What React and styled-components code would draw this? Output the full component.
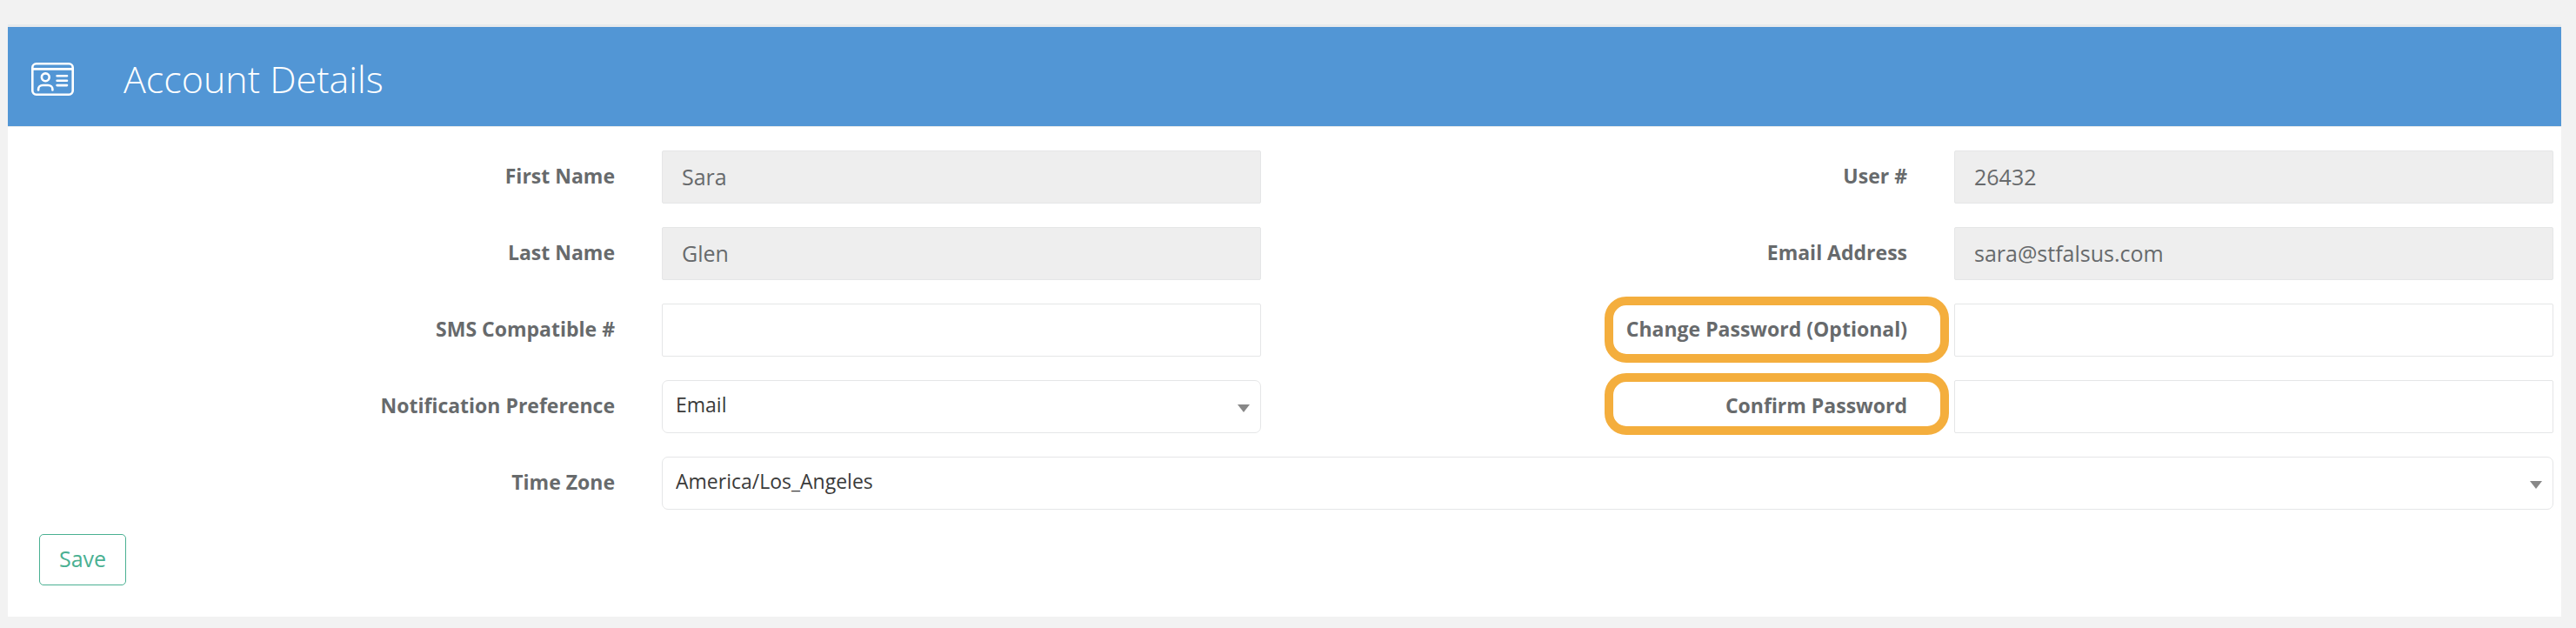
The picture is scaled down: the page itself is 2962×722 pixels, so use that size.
import React, {useState} from "react";
import styled, {createGlobalStyle} from "styled-components";

const GlobalStyle = createGlobalStyle`
  * {
    box-sizing: border-box;
  }

  body {
    margin: 0;
    background: #f2f2f2;
    color: #676a6c;
    font-family: "Open Sans", "Noto Sans", sans-serif;
  }
`;

const IdCardSvg = () => (
    <svg width="49" height="38" viewBox="0 0 49 38" fill="none" stroke="#fff" strokeWidth="2.6"
         strokeLinecap="round" aria-hidden="true">
        <rect x="1.3" y="1.3" width="46.4" height="35.4" rx="4.4"/>
        <path d="M1.5 7.4H47.5" strokeLinecap="butt"/>
        <circle cx="16.3" cy="16.8" r="4.4"/>
        <path d="M8.1 31.4V30.6C8.1 27.7 10.4 26 13.1 26H19.3C22 26 24.4 27.7 24.4 30.6V31.4"/>
        <path d="M29.6 15.2H41M29.6 20.7H41M29.6 26.1H41"/>
    </svg>
);

const Field = ({id, label, highlight, ...inputProps}) => (
    <>
        <Label htmlFor={id}>
            {label}
            {highlight && <Highlight $size={highlight}/>}
        </Label>
        <Input id={id} {...inputProps}/>
    </>
);

const SelectField = ({id, label, options, wide}) => {
    const [value, setValue] = useState(options[0]);

    return (
        <>
            <Label htmlFor={id}>{label}</Label>
            <SelectBox $wide={wide}>
                <Select id={id} value={value} onChange={(e) => setValue(e.target.value)}>
                    {options.map((option) => <option key={option}>{option}</option>)}
                </Select>
            </SelectBox>
        </>
    );
};

const App = () => {

    return (
        <Page>
            <GlobalStyle/>
            <Card>
                <Header>
                    <IdCardSvg/>
                    <Title>Account Details</Title>
                </Header>

                <Form onSubmit={(e) => e.preventDefault()}>
                    <Fields>
                        <Field id="firstName" label="First Name" defaultValue="Sara" disabled/>
                        <Field id="userNumber" label="User #" defaultValue="26432" disabled/>

                        <Field id="lastName" label="Last Name" defaultValue="Glen" disabled/>
                        <Field id="email" label="Email Address" defaultValue="sara@stfalsus.com" disabled/>

                        <Field id="sms" label="SMS Compatible #" type="tel"/>
                        <Field id="password" label="Change Password (Optional)" type="password" highlight="large"/>

                        <SelectField id="notification" label="Notification Preference" options={["Email", "SMS"]}/>
                        <Field id="confirm" label="Confirm Password" type="password" highlight="small"/>

                        <SelectField id="timeZone" label="Time Zone" wide
                                     options={["America/Los_Angeles", "America/Denver", "America/Chicago", "America/New_York"]}/>
                    </Fields>

                    <SaveButton type="submit">Save</SaveButton>
                </Form>
            </Card>
        </Page>
    );
};

export default App;

const Page = styled.main`
  padding: 28px 17px 13px 9px;
`;

const Card = styled.section`
  background: #fff;
  border-top: 3px solid #e7eaec;
`;

const Header = styled.header`
  display: flex;
  align-items: center;
  gap: 57px;
  padding: 30px 27px 24px;
  background: #5296d5;
  border-bottom: 1px solid #e7eaec;
`;

const Title = styled.h1`
  margin: 0;
  color: #fff;
  font-size: 43px;
  font-weight: 300;
  line-height: 60px;
`;

const Form = styled.form`
  padding: 27px 9px 36px;
`;

const Fields = styled.div`
  display: grid;
  grid-template-columns: repeat(4, minmax(0, 1fr));
  gap: 27px 54px;
`;

const Label = styled.label`
  position: relative;
  padding-top: 12px;
  font-size: 23px;
  font-weight: 700;
  line-height: 34px;
  text-align: right;
`;

// orange ring drawn over the label
const Highlight = styled.span`
  position: absolute;
  top: -8px;
  right: -48px;
  width: 396px;
  height: ${({$size}) => $size === "large" ? "76px" : "71px"};
  border: 10px solid #f4ae3d;
  border-radius: 25px;
  pointer-events: none;
`;

const Input = styled.input`
  width: 100%;
  height: 61px;
  padding: 0 22px 2px;
  background: #fff;
  border: 1px solid #e5e6e7;
  border-radius: 2px;
  color: #676a6c;
  font-family: inherit;
  font-size: 25px;

  &:disabled {
    background: #eee;
  }
`;

const SelectBox = styled.div`
  position: relative;
  grid-column: ${({$wide}) => $wide ? "span 3" : "auto"};

  &::after {
    content: "";
    position: absolute;
    top: 28px;
    right: 13px;
    border: 7px solid transparent;
    border-top: 9px solid #888;
    border-bottom: 0;
    pointer-events: none;
  }
`;

const Select = styled.select`
  display: block;
  width: 100%;
  height: 61px;
  padding: 0 40px 5px 15px;
  appearance: none;
  background: #fff;
  border: 1px solid #e5e6e7;
  border-radius: 7px;
  color: #3a3a3a;
  font-family: inherit;
  font-size: 23px;
`;

const SaveButton = styled.button`
  display: block;
  height: 59px;
  margin: 28px 0 0 27px;
  padding: 0 22px 3px;
  background: #fff;
  border: 1px solid #4ab092;
  border-radius: 5px;
  color: #4ab092;
  font-family: inherit;
  font-size: 25px;
  cursor: pointer;
`;
